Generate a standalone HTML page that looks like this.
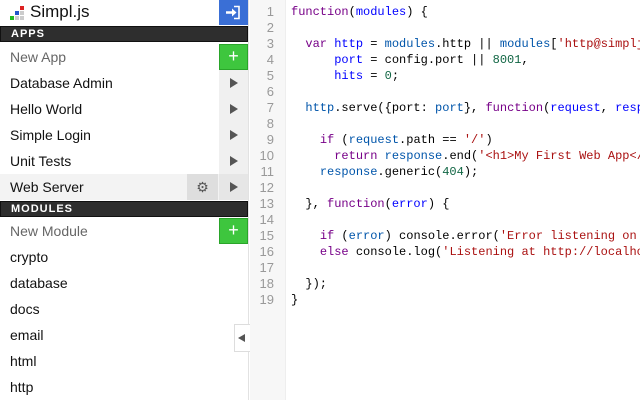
<!DOCTYPE html>
<html><head><meta charset="utf-8"><style>
*{margin:0;padding:0;box-sizing:border-box}
html,body{width:640px;height:400px;overflow:hidden}
body{background:#fff;font-family:"Liberation Sans",sans-serif;position:relative}
#side{position:absolute;left:0;top:0;width:249px;height:400px;background:#fff;border-right:1px solid #e2e2e2}
.abs{position:absolute}
.bar{position:absolute;left:0;width:248px;height:16px;background:#2e2e2e;border:1px solid #111;color:#fff;font-size:11px;font-weight:bold;letter-spacing:1px;padding-left:10px;line-height:14px}
.row{position:absolute;left:0;width:248px;height:26px;font-size:14px;line-height:26px;padding-left:10px;color:#111}
.arr{position:absolute;right:0;top:0;width:29px;height:26px;background:#f0f0f0}
.arr:after{content:"";position:absolute;left:11px;top:8px;border-left:8px solid #555;border-top:5px solid transparent;border-bottom:5px solid transparent}
.green{position:absolute;left:219px;width:29px;height:26px;background:#3ec63e;border:1px solid #2aa52a;color:#fff;font-size:18px;line-height:23px;text-align:center}
#gut{position:absolute;left:250px;top:0;width:36px;height:400px;background:#f7f7f7;border-right:1px solid #eee}
#gut div{height:16px;line-height:16px;font-size:13px;text-align:right;padding-right:11px;color:#999}
#codewrap{position:absolute;left:287px;top:0;width:353px;height:400px;overflow:hidden}
#code{position:absolute;left:4px;top:4px}
#code div{height:16px;line-height:16px;font-family:"Liberation Mono",monospace;font-size:12px;white-space:pre}
.k{color:#708}.d{color:#00f}.v{color:#05a}.s{color:#a11}.n{color:#164}
</style></head><body>
<div id="side">
 <div class="abs" style="left:20px;top:6px;width:4px;height:4px;background:#d22"></div>
 <div class="abs" style="left:15px;top:11px;width:4px;height:4px;background:#25c"></div>
 <div class="abs" style="left:20px;top:11px;width:4px;height:4px;background:#ccc"></div>
 <div class="abs" style="left:10px;top:16px;width:4px;height:4px;background:#2b2"></div>
 <div class="abs" style="left:15px;top:16px;width:4px;height:4px;background:#ccc"></div>
 <div class="abs" style="left:20px;top:16px;width:4px;height:4px;background:#ccc"></div>
 <div class="abs" style="left:30px;top:2px;font-size:17px;color:#111">Simpl.js</div>
 <div class="abs" style="left:219px;top:0;width:29px;height:25px;background:#3a6fd6">
  <svg width="29" height="25" viewBox="0 0 29 25"><path d="M7 12.5h8" stroke="#fff" stroke-width="2.5"/><path d="M13 8.5l4.5 4-4.5 4z" fill="#fff"/><path d="M15 6.5h5v12h-5" stroke="#fff" stroke-width="1.6" fill="none"/></svg>
 </div>
 <div class="bar" style="top:26px">APPS</div>
 <div class="row" style="top:44px;color:#666">New App</div>
 <div class="green" style="top:44px">+</div>
 <div class="row" style="top:70px">Database Admin<div class="arr"></div></div>
 <div class="row" style="top:96px">Hello World<div class="arr"></div></div>
 <div class="row" style="top:122px">Simple Login<div class="arr"></div></div>
 <div class="row" style="top:148px">Unit Tests<div class="arr"></div></div>
 <div class="row" style="top:174px;background:#f3f3f3">Web Server
  <div class="abs" style="left:187px;top:0;width:31px;height:26px;background:#dedede;color:#555;font-size:14px;text-align:center;line-height:26px">⚙</div>
  <div class="arr" style="background:#e6e6e6"></div></div>
 <div class="bar" style="top:201px">MODULES</div>
 <div class="row" style="top:218px;color:#666">New Module</div>
 <div class="green" style="top:218px">+</div>
 <div class="row" style="top:244px">crypto</div>
 <div class="row" style="top:270px">database</div>
 <div class="row" style="top:296px">docs</div>
 <div class="row" style="top:322px">email</div>
 <div class="row" style="top:348px">html</div>
 <div class="row" style="top:374px">http</div>
</div>
<div id="gut"><div style="height:4px"></div><div>1</div><div>2</div><div>3</div><div>4</div><div>5</div><div>6</div><div>7</div><div>8</div><div>9</div><div>10</div><div>11</div><div>12</div><div>13</div><div>14</div><div>15</div><div>16</div><div>17</div><div>18</div><div>19</div></div>
<div class="abs" style="left:234px;top:324px;width:16px;height:28px;background:#fff;border:1px solid #ddd;border-right:none">
 <div class="abs" style="left:3px;top:9px;border-right:7px solid #555;border-top:4px solid transparent;border-bottom:4px solid transparent"></div></div>
<div id="codewrap"><div id="code">
<div><span class="k">function</span>(<span class="d">modules</span>) {</div>
<div> </div>
<div>  <span class="k">var</span> <span class="d">http</span> = <span class="v">modules</span>.http || <span class="v">modules</span>[<span class="s">'http@simpljs'</span>],</div>
<div>      <span class="d">port</span> = config.port || <span class="n">8001</span>,</div>
<div>      <span class="d">hits</span> = <span class="n">0</span>;</div>
<div> </div>
<div>  <span class="v">http</span>.serve({port: <span class="v">port</span>}, <span class="k">function</span>(<span class="d">request</span>, <span class="d">response</span>) {</div>
<div> </div>
<div>    <span class="k">if</span> (<span class="v">request</span>.path == <span class="s">'/'</span>)</div>
<div>      <span class="k">return</span> <span class="v">response</span>.end(<span class="s">'&lt;h1&gt;My First Web App&lt;/h1&gt;'</span>);</div>
<div>    <span class="v">response</span>.generic(<span class="n">404</span>);</div>
<div> </div>
<div>  }, <span class="k">function</span>(<span class="d">error</span>) {</div>
<div> </div>
<div>    <span class="k">if</span> (<span class="v">error</span>) console.error(<span class="s">'Error listening on port'</span>);</div>
<div>    <span class="k">else</span> console.log(<span class="s">'Listening at http://localhost'</span>);</div>
<div> </div>
<div>  });</div>
<div>}</div>
</div></div>
</body></html>
